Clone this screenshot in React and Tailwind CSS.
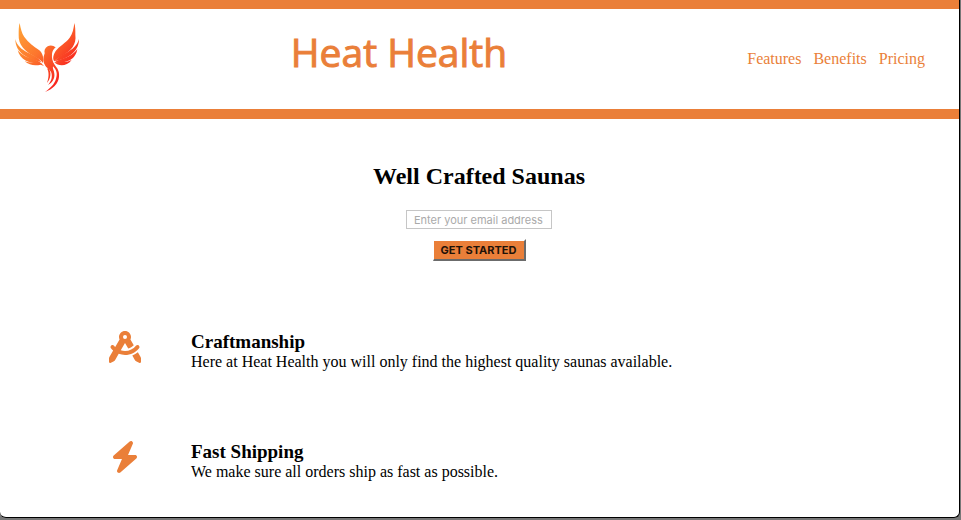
import { FaCompassDrafting, FaBolt } from "react-icons/fa6";

function PhoenixLogo() {
  return (
    <svg viewBox="45 66 195 213" className="h-[71px] w-[65px]" role="img" aria-label="Heat Health logo">
      <defs>
        <linearGradient id="flame" gradientUnits="userSpaceOnUse" x1="50" y1="90" x2="205" y2="225">
          <stop offset="0" stopColor="#ffa036" />
          <stop offset="0.45" stopColor="#fc752d" />
          <stop offset="1" stopColor="#f81d1d" />
        </linearGradient>
      </defs>
      <g fill="url(#flame)">
        <path d="M59 69C62 86 65 99 73 111C85 128 103 141 117 150C127 158 132 172 129 189C123 180 113 175 101 168C76 154 54 134 56 104C56 91 56 79 59 69Z" />
        <path d="M46 117C50 137 65 148 84 158C103 167 118 174 124 187C106 181 86 176 71 165C55 153 46 138 46 117Z" />
        <path d="M53 150C64 165 82 172 98 176C111 180 119 184 125 192C109 190 92 189 78 182C65 175 56 164 53 150Z" />
        <path d="M74 184C89 190 109 187 123 189L132 198L122 194C107 198 88 197 74 184Z" />
        <path d="M223 69C221 86 218 101 209 113C197 129 177 139 167 153C160 164 157 176 163 184C169 176 178 172 190 165C213 152 230 133 226 104C226 91 226 79 223 69Z" />
        <path d="M237 117C232 137 217 148 199 158C181 167 171 173 164 184C181 180 198 175 212 165C228 153 237 137 237 117Z" />
        <path d="M232 147C221 163 204 171 188 176C177 179 170 182 164 187C179 190 195 187 209 181C222 174 230 161 232 147Z" />
        <path d="M215 180C201 188 181 185 163 187C175 199 199 201 215 180Z" />
        <path d="M167 142C161 136 150 134 143 139C134 144 132 152 134 160C128 174 129 187 136 197C143 207 153 209 155 222C157 238 151 246 144 255C157 247 165 236 163 221C162 211 157 205 159 199C170 210 173 221 168 236C163 254 149 265 135 276C158 268 175 251 177 231C179 211 171 204 164 194C157 184 155 174 156 162C157 154 160 148 167 142Z" />
        <path d="M144 203C156 215 152 236 141 249C146 235 148 219 142 207Z" />
      </g>
    </svg>
  );
}

function Feature({ icon, title, children }) {
  return (
    <article className="flex h-[110px] items-start">
      <div className="flex w-8 shrink-0 justify-center text-[32px] text-[#ea7f39]">{icon}</div>
      <div className="ml-[50px]">
        <h3 className="text-[19px] leading-[22px] font-bold">{title}</h3>
        <p className="text-base leading-[18px]">{children}</p>
      </div>
    </article>
  );
}

export default function App() {
  return (
    <div className="h-screen overflow-hidden bg-[#777777] pr-px pb-[2px] font-['Liberation_Serif',serif] text-black">
      <div className="h-full overflow-hidden rounded-b-md border-r border-b border-black bg-white">
        <header className="flex h-[119px] items-center justify-between border-t-[9px] border-b-[10px] border-[#ea7f39] pr-[34px] pl-[15px] text-[#ea7f39]">
          <div className="pb-1">
            <PhoenixLogo />
          </div>
          <h1 className="pb-4 font-['Open_Sans',sans-serif] text-[39px] leading-none [-webkit-text-stroke:1px_#ea7f39]">Heat Health</h1>
          <nav className="flex w-[207px] justify-end gap-3">
            <a href="#features">Features</a>
            <a href="#benefits">Benefits</a>
            <a href="#pricing">Pricing</a>
          </nav>
        </header>
        <main className="pr-px">
          <section className="flex flex-col items-center pt-[43px]">
            <h2 className="text-2xl leading-7 font-bold">Well Crafted Saunas</h2>
            <form className="mt-5 flex flex-col items-center gap-[10px] font-['Inter',sans-serif] text-[11px]" onSubmit={(e) => e.preventDefault()}>
              <input
                type="email"
                aria-label="Email address"
                placeholder="Enter your email address"
                className="h-[19px] w-[146px] border border-[#c6c6c6] px-[7px] placeholder:text-[#aaaaaa]"
              />
              <button
                type="submit"
                className="h-[22px] w-[93px] border-t-2 border-r-2 border-b-2 border-l border-t-white border-r-[#6b6b6b] border-b-[#6b6b6b] border-l-white bg-[#ea7f39] leading-none font-bold whitespace-nowrap text-[#1f1208]"
              >
                GET STARTED
              </button>
            </form>
          </section>
          <section id="features" className="mt-[70px] ml-[109px]">
            <Feature icon={<FaCompassDrafting />} title="Craftmanship">
              Here at Heat Health you will only find the highest quality saunas available.
            </Feature>
            <Feature icon={<FaBolt />} title="Fast Shipping">
              We make sure all orders ship as fast as possible.
            </Feature>
          </section>
        </main>
      </div>
    </div>
  );
}
